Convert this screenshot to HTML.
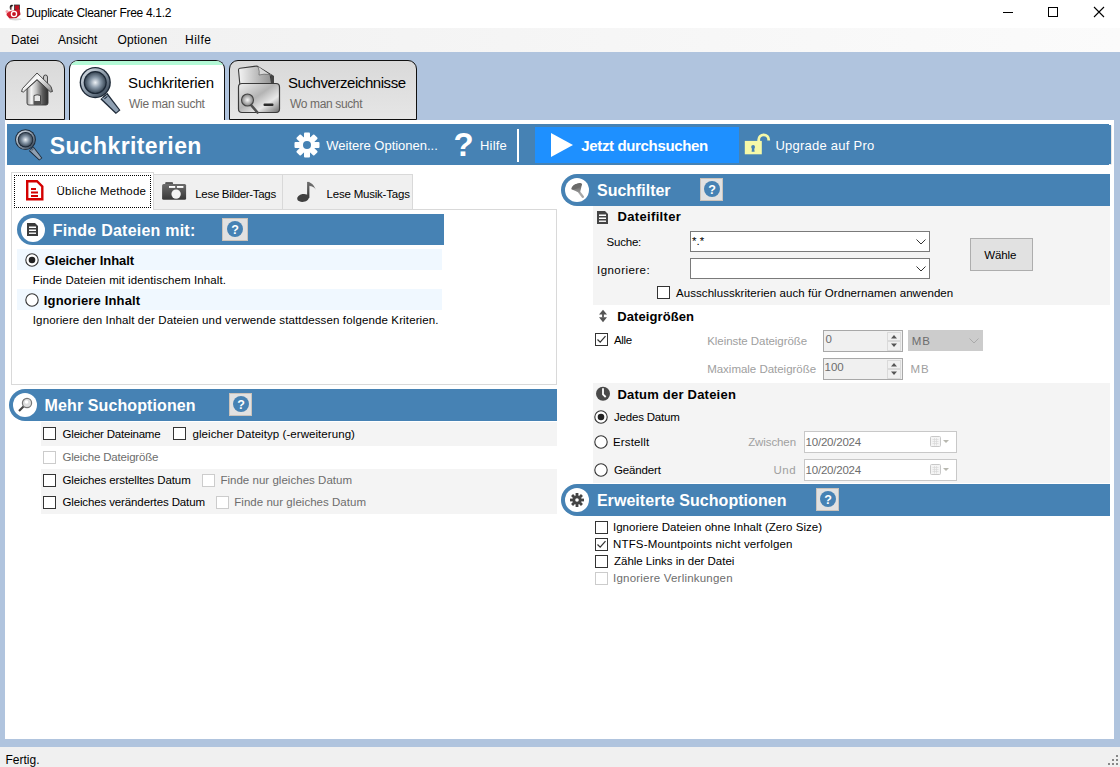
<!DOCTYPE html><html><head><meta charset='utf-8'><style>html,body{margin:0;padding:0;width:1120px;height:767px;overflow:hidden;position:relative}body{font-family:"Liberation Sans", sans-serif;}.t{position:absolute;line-height:1;white-space:nowrap}</style></head><body>
<div style='position:absolute;left:0px;top:0px;width:1120px;height:28px;background:#fff'></div>
<div style='position:absolute;left:0px;top:28px;width:1120px;height:24px;background:linear-gradient(to right,#f0f0f0,#fbfbfb)'></div>
<div style='position:absolute;left:0px;top:52px;width:1120px;height:695px;background:#b0c4de'></div>
<div style='position:absolute;left:0px;top:747px;width:1120px;height:20px;background:#f0f0f0'></div>
<svg style='position:absolute;left:2px;top:2px;' width='24' height='24' viewBox='0 0 24 24'>
<defs><linearGradient id='apg' x1='0' y1='0' x2='1' y2='1'><stop offset='0' stop-color='#e83040'/><stop offset='1' stop-color='#b00818'/></linearGradient></defs>
<ellipse cx='13.5' cy='17.3' rx='6' ry='1.1' fill='#c8c8c8' opacity='.7'/>
<rect x='12.5' y='3' width='5' height='5' fill='#c01020' stroke='#333' stroke-width='.8'/>
<path d='M5 10 L17.5 7 L18.5 12.5 L14.5 16 L7.5 16.5 L4.5 13 Z' fill='url(#apg)'/>
<path d='M8 7.5 Q7 3 9.5 2.7 L11.5 3 Q9.5 4 10 8' fill='#1a1a1a'/>
<path d='M9.5 8.5 Q8.5 5 10 4.5' stroke='#f0b0b0' stroke-width='1' fill='none'/>
<circle cx='12' cy='12' r='2.6' fill='none' stroke='#fff' stroke-width='1.3'/>
<circle cx='12' cy='12' r='1' fill='#c01020'/>
<circle cx='5' cy='9.5' r='1.5' fill='#f4a8b0'/>
</svg>
<div class='t' style='left:26px;top:7px;font-size:12px;font-weight:400;color:#000;letter-spacing:-0.296px;'>Duplicate Cleaner Free 4.1.2</div>
<div style='position:absolute;left:1003px;top:12px;width:10px;height:1px;background:#000'></div>
<div style='position:absolute;left:1048px;top:7px;width:10px;height:10px;border:1px solid #000;box-sizing:border-box'></div>
<svg style='position:absolute;left:1093px;top:6px;' width='12' height='12' viewBox='0 0 12 12'><path d='M1 1 L11 11 M11 1 L1 11' stroke='#000' stroke-width='1.1'/></svg>
<div class='t' style='left:11px;top:34px;font-size:12px;font-weight:400;color:#000;letter-spacing:0.000px;'>Datei</div>
<div class='t' style='left:58px;top:34px;font-size:12px;font-weight:400;color:#000;letter-spacing:0.000px;'>Ansicht</div>
<div class='t' style='left:117.5px;top:34px;font-size:12px;font-weight:400;color:#000;letter-spacing:0.143px;'>Optionen</div>
<div class='t' style='left:185px;top:34px;font-size:12px;font-weight:400;color:#000;letter-spacing:0.500px;'>Hilfe</div>
<div class='t' style='left:5.5px;top:753.5px;font-size:12px;font-weight:400;color:#000;letter-spacing:0.000px;'>Fertig.</div>
<svg style='position:absolute;left:1108px;top:755px;' width='11' height='11' viewBox='0 0 11 11'><g fill='#888'><rect x='8' y='0' width='2' height='2'/><rect x='4' y='4' width='2' height='2'/><rect x='8' y='4' width='2' height='2'/><rect x='0' y='8' width='2' height='2'/><rect x='4' y='8' width='2' height='2'/><rect x='8' y='8' width='2' height='2'/></g></svg>
<div style='position:absolute;left:5px;top:60px;width:60px;height:60px;border:1.5px solid #101010;border-radius:9px 9px 0 0;box-sizing:border-box;background:linear-gradient(#d9d9d9,#e6e6e6)'></div>
<div style='position:absolute;left:229px;top:60px;width:188px;height:60px;border:1.5px solid #101010;border-radius:9px 9px 0 0;box-sizing:border-box;background:linear-gradient(#d9d9d9,#e6e6e6)'></div>
<div style='position:absolute;left:5px;top:120px;width:1109px;height:619px;background:#fff'></div>
<div style='position:absolute;left:69px;top:60px;width:156px;height:60px;border:1.5px solid #101010;border-bottom:none;border-radius:9px 9px 0 0;box-sizing:border-box;background:#fff;overflow:hidden'><div style='height:4px;background:#b3f9d6;margin-top:0px'></div></div>
<svg style='position:absolute;left:20px;top:71px;' width='34' height='36' viewBox='0 0 34 36'>
<defs>
<linearGradient id='hb' x1='0' y1='0' x2='1' y2='0'><stop offset='0' stop-color='#9a9a9a'/><stop offset='.2' stop-color='#f6f6f6'/><stop offset='.45' stop-color='#c0c0c0'/><stop offset='.75' stop-color='#5a5a5a'/><stop offset='1' stop-color='#2e2e2e'/></linearGradient>
<linearGradient id='hr' x1='0' y1='0' x2='1' y2='1'><stop offset='0' stop-color='#d0d0d0'/><stop offset='.4' stop-color='#fafafa'/><stop offset='1' stop-color='#8a8a8a'/></linearGradient>
</defs>
<path d='M23.5 6 Q23.5 4 25.5 4 Q27.5 4 27.5 6 L27.5 15 L23.5 15Z' fill='#c8c8c8' stroke='#3a3a3a' stroke-width='.9'/>
<path d='M7 18 L7 32 Q7 34 9 34 L26 34 Q28 34 28 32 L28 18 L17 9 Z' fill='url(#hb)' stroke='#3a3a3a' stroke-width='.9'/>
<path d='M1.5 20.5 L2.5 17.5 L17 2 L31 15.5 L32.5 20.5 L30.5 21 L17 8.5 L3.5 21 Z' fill='url(#hr)' stroke='#3a3a3a' stroke-width='.9'/>
<path d='M14 33.5 V24.5 Q17 23 20.5 24.5 V33.5' fill='#e8e8e8' stroke='#3a3a3a' stroke-width='.9'/>
<rect x='14' y='30' width='6.5' height='4' fill='#555'/>
</svg>
<svg style='position:absolute;left:72.35px;top:61.75px;' width='54.0' height='54.0' viewBox='0 0 54.0 54.0'><g transform='scale(1.5)'>
<defs>
<linearGradient id='rgt' x1='0' y1='0' x2='1' y2='1'><stop offset='0' stop-color='#e4eaf0'/><stop offset='.5' stop-color='#8c9aa8'/><stop offset='1' stop-color='#2a3848'/></linearGradient>
<radialGradient id='lgt' cx='.5' cy='.5' r='.55'><stop offset='0' stop-color='#eef2f6'/><stop offset='.45' stop-color='#8a9aaa'/><stop offset='1' stop-color='#2c3a48'/></radialGradient>
<linearGradient id='hgt' x1='0' y1='0' x2='1' y2='0'><stop offset='0' stop-color='#56687a'/><stop offset='.5' stop-color='#c8d4e0'/><stop offset='1' stop-color='#3c4c5c'/></linearGradient>
</defs>
<path d='M18.9 24.9 L23.5 20.5 L32.3 32.1 L29.2 34.6 Z' fill='#1c2836'/>
<path d='M19.9 24.5 L23.2 21.6 L31.3 32.0 L29.4 33.6 Z' fill='#8fa0b2'/>
<path d='M20.6 23.6 L22.6 21.9' stroke='#1c2836' stroke-width='.7'/><path d='M21.6 24.6 L23.6 22.9' stroke='#1c2836' stroke-width='.7'/>
<circle cx='15.5' cy='13.7' r='10.4' fill='#1c2836'/>
<circle cx='15.5' cy='13.7' r='9.5' fill='url(#rgt)'/>
<circle cx='15.5' cy='13.7' r='7.7' fill='#1c2836'/>
<circle cx='15.5' cy='13.7' r='6.9' fill='url(#lgt)'/>
</g></svg>
<div class='t' style='left:128px;top:75px;font-size:15px;font-weight:400;color:#000;letter-spacing:-0.125px;'>Suchkriterien</div>
<div class='t' style='left:129px;top:97.5px;font-size:12px;font-weight:400;color:#6e6a66;letter-spacing:-0.292px;'>Wie man sucht</div>
<svg style='position:absolute;left:236px;top:64px;' width='46' height='52' viewBox='0 0 46 52'>
<defs>
<linearGradient id='fb' x1='0' y1='0' x2='1' y2='1'><stop offset='0' stop-color='#f0f0f0'/><stop offset='.45' stop-color='#b4b4b4'/><stop offset='.7' stop-color='#e8e8e8'/><stop offset='1' stop-color='#6a6a6a'/></linearGradient>
<linearGradient id='fp' x1='0' y1='0' x2='1' y2='0'><stop offset='0' stop-color='#f4f4f4'/><stop offset='1' stop-color='#909090'/></linearGradient>
<radialGradient id='fl' cx='.5' cy='.5' r='.5'><stop offset='0' stop-color='#f8f8f8'/><stop offset='1' stop-color='#808080'/></radialGradient>
</defs>
<path d='M4 22 L2.5 6 Q2.5 4.5 4 4.3 L21 2 L34 10 L36 22 Z' fill='url(#fp)' stroke='#3a3a3a' stroke-width='1.1'/>
<path d='M22 2.5 Q24 8 23 11 Q28 9.5 33.5 10.5' fill='#d8d8d8' stroke='#555' stroke-width='.6'/>
<path d='M35 10 L38 12 L38 22 L35 22Z' fill='#444'/>
<path d='M2.5 23 Q2.5 19.5 6 19.5 L40 19.5 Q43.5 19.5 43.5 23 L43.5 45 Q43.5 48.5 40 48.5 L6 48.5 Q2.5 48.5 2.5 45 Z' fill='url(#fb)' stroke='#3a3a3a' stroke-width='1.2'/>
<rect x='27.5' y='39.5' width='10' height='2.5' rx='1' fill='#2a2a2a'/>
<path d='M15 41 L21.5 48.5' stroke='#505050' stroke-width='2.6' stroke-linecap='round'/>
<circle cx='11.5' cy='36' r='6' fill='url(#fl)' stroke='#444' stroke-width='1.1'/>
</svg>
<div class='t' style='left:288px;top:75px;font-size:15px;font-weight:400;color:#000;letter-spacing:-0.438px;'>Suchverzeichnisse</div>
<div class='t' style='left:290px;top:97.5px;font-size:12px;font-weight:400;color:#6e6a66;letter-spacing:-0.364px;'>Wo man sucht</div>
<div style='position:absolute;left:7px;top:124px;width:1102px;height:41px;background:#4682b4'></div>
<div style='position:absolute;left:1109px;top:125px;width:2px;height:39px;background:#4682b4;box-shadow:0.5px 0.5px 0.5px rgba(80,60,40,.25)'></div>
<svg style='position:absolute;left:10px;top:126px;' width='36.0' height='36.0' viewBox='0 0 36.0 36.0'><g transform='scale(1.0)'>
<defs>
<linearGradient id='rgh' x1='0' y1='0' x2='1' y2='1'><stop offset='0' stop-color='#e4eaf0'/><stop offset='.5' stop-color='#8c9aa8'/><stop offset='1' stop-color='#2a3848'/></linearGradient>
<radialGradient id='lgh' cx='.5' cy='.5' r='.55'><stop offset='0' stop-color='#eef2f6'/><stop offset='.45' stop-color='#8a9aaa'/><stop offset='1' stop-color='#2c3a48'/></radialGradient>
<linearGradient id='hgh' x1='0' y1='0' x2='1' y2='0'><stop offset='0' stop-color='#56687a'/><stop offset='.5' stop-color='#c8d4e0'/><stop offset='1' stop-color='#3c4c5c'/></linearGradient>
</defs>
<path d='M18.9 24.9 L23.5 20.5 L32.3 32.1 L29.2 34.6 Z' fill='#1c2836'/>
<path d='M19.9 24.5 L23.2 21.6 L31.3 32.0 L29.4 33.6 Z' fill='#8fa0b2'/>
<path d='M20.6 23.6 L22.6 21.9' stroke='#1c2836' stroke-width='.7'/><path d='M21.6 24.6 L23.6 22.9' stroke='#1c2836' stroke-width='.7'/>
<circle cx='15.5' cy='13.7' r='10.4' fill='#1c2836'/>
<circle cx='15.5' cy='13.7' r='9.5' fill='url(#rgh)'/>
<circle cx='15.5' cy='13.7' r='7.7' fill='#1c2836'/>
<circle cx='15.5' cy='13.7' r='6.9' fill='url(#lgh)'/>
</g></svg>
<div class='t' style='left:49.7px;top:134.5px;font-size:23px;font-weight:700;color:#fff;letter-spacing:0.392px;'>Suchkriterien</div>
<svg style='position:absolute;left:294px;top:132px;' width='26' height='26' viewBox='0 0 26 26'><g transform='translate(13 13)' fill='#fff'>
<circle r='8.2'/>
<rect x='-3' y='-12.5' width='6' height='6' rx='1' transform='rotate(0)'/><rect x='-3' y='-12.5' width='6' height='6' rx='1' transform='rotate(45)'/><rect x='-3' y='-12.5' width='6' height='6' rx='1' transform='rotate(90)'/><rect x='-3' y='-12.5' width='6' height='6' rx='1' transform='rotate(135)'/><rect x='-3' y='-12.5' width='6' height='6' rx='1' transform='rotate(180)'/><rect x='-3' y='-12.5' width='6' height='6' rx='1' transform='rotate(225)'/><rect x='-3' y='-12.5' width='6' height='6' rx='1' transform='rotate(270)'/><rect x='-3' y='-12.5' width='6' height='6' rx='1' transform='rotate(315)'/>
<circle r='4' fill='#4682b4'/></g></svg>
<div class='t' style='left:326.3px;top:138.8px;font-size:13px;font-weight:400;color:#fff;letter-spacing:-0.017px;'>Weitere Optionen...</div>
<div class='t' style='left:453.5px;top:127.5px;font-size:33px;font-weight:700;color:#fff;'>?</div>
<div class='t' style='left:480px;top:138.8px;font-size:13px;font-weight:400;color:#fff;letter-spacing:0.175px;'>Hilfe</div>
<div style='position:absolute;left:517px;top:129px;width:2px;height:33px;background:#fff'></div>
<div style='position:absolute;left:535px;top:127px;width:204px;height:36px;background:#1e90ff'></div>
<svg style='position:absolute;left:550px;top:133px;' width='24' height='25' viewBox='0 0 24 25'><path d='M1 0 L23 12 L1 24 Z' fill='#fff'/></svg>
<div class='t' style='left:581.3px;top:138px;font-size:15px;font-weight:700;color:#fff;letter-spacing:-0.356px;'>Jetzt durchsuchen</div>
<svg style='position:absolute;left:740px;top:128px;' width='36' height='32' viewBox='0 0 36 32'>
<path d='M18.7 13.5 V11.8 a5 5 0 0 1 10 0 V12.6' fill='none' stroke='#f6f9a8' stroke-width='2.8'/>
<rect x='4.8' y='12.9' width='17' height='13.4' fill='#f6f9a8'/>
<circle cx='13.1' cy='19' r='1.9' fill='#4682b4'/><path d='M12.1 19.5 H14.1 L14.6 23.8 H11.6Z' fill='#4682b4'/>
</svg>
<div class='t' style='left:775.4px;top:138.8px;font-size:13px;font-weight:400;color:#fff;letter-spacing:0.243px;'>Upgrade auf Pro</div>
<div style='position:absolute;left:11px;top:209px;width:546px;height:176px;border:1px solid #d9d9d9;box-sizing:border-box;background:#fff'></div>
<div style='position:absolute;left:153px;top:174px;width:130px;height:36px;border:1px solid #d9d9d9;box-sizing:border-box;background:#f0f0f0'></div>
<div style='position:absolute;left:282px;top:174px;width:131px;height:36px;border:1px solid #d9d9d9;box-sizing:border-box;background:#f0f0f0'></div>
<div style='position:absolute;left:11px;top:172px;width:143px;height:38px;border:1px solid #d9d9d9;border-bottom:none;box-sizing:border-box;background:#fff'></div>
<div style='position:absolute;left:14px;top:175px;width:137px;height:33px;border:1px dotted #000;box-sizing:border-box'></div>
<svg style='position:absolute;left:26px;top:180px;' width='18' height='21' viewBox='0 0 18 21'><path d='M1.2 1.2 H11 L16.3 6.5 V19.3 H1.2 Z' fill='none' stroke='#d40000' stroke-width='2.4' stroke-linejoin='miter'/><rect x='5' y='8' width='5' height='2' fill='#d40000'/><rect x='5' y='11.5' width='7' height='2' fill='#d40000'/><rect x='5' y='15' width='7' height='2' fill='#d40000'/></svg>
<div class='t' style='left:56.6px;top:186px;font-size:11.5px;font-weight:400;color:#000;letter-spacing:0.221px;'>Übliche Methode</div>
<svg style='position:absolute;left:161px;top:181px;' width='26' height='20' viewBox='0 0 26 20'><defs><linearGradient id='cam' x1='0' y1='0' x2='0' y2='1'><stop offset='0' stop-color='#6c6c6c'/><stop offset='1' stop-color='#383838'/></linearGradient></defs><rect x='4.2' y='0.9' width='7.8' height='4' rx='1' fill='url(#cam)'/><rect x='1.1' y='3' width='24' height='15.7' rx='1.5' fill='url(#cam)'/><rect x='8' y='5' width='6.2' height='1.9' fill='#fff'/><rect x='15.9' y='5' width='6.5' height='1.9' fill='#fff'/><circle cx='15.1' cy='13.1' r='4.7' fill='#f4f4f4'/></svg>
<div class='t' style='left:195.3px;top:188.5px;font-size:11.5px;font-weight:400;color:#000;letter-spacing:-0.320px;'>Lese Bilder-Tags</div>
<svg style='position:absolute;left:296px;top:181px;' width='22' height='22' viewBox='0 0 22 22'><defs><linearGradient id='nte' x1='0' y1='0' x2='0' y2='1'><stop offset='0' stop-color='#707070'/><stop offset='1' stop-color='#363636'/></linearGradient></defs><path d='M11.1 0.9 Q17 1 19.9 8.7 Q17.5 5 13.4 5 Z' fill='#6a6a6a'/><rect x='11.1' y='0.9' width='2.3' height='16' fill='url(#nte)'/><ellipse cx='7.1' cy='16.9' rx='6' ry='3.9' transform='rotate(-10 7.1 16.9)' fill='#404040'/></svg>
<div class='t' style='left:326.6px;top:188.5px;font-size:11.5px;font-weight:400;color:#000;letter-spacing:-0.214px;'>Lese Musik-Tags</div>
<div style='position:absolute;left:17px;top:214px;width:427px;height:31px;background:#4682b4;border-radius:15.5px 0 0 15.5px'></div>
<div style='position:absolute;left:21px;top:218px;width:24px;height:24px;background:#fff;border-radius:50%'></div>
<svg style='position:absolute;left:27px;top:223px' width='11' height='13' viewBox='0 0 11 13'><path d='M0 0 H8 L11 3 V13 H0Z' fill='#3c3c3c'/><rect x='2' y='3.5' width='7' height='1.5' fill='#fff'/><rect x='2' y='6.5' width='7' height='1.5' fill='#fff'/><rect x='2' y='9.5' width='7' height='1.5' fill='#eee'/></svg>
<div class='t' style='left:52.7px;top:222.6px;font-size:16px;font-weight:700;color:#fff;letter-spacing:0.229px;'>Finde Dateien mit:</div>
<div style='position:absolute;left:222px;top:218px;width:26px;height:23px;background:#e1e1e1;border:1px solid #cbc3bb;box-sizing:border-box'></div>
<svg style='position:absolute;left:227.0px;top:221px;' width='16' height='16' viewBox='0 0 16 16'><circle cx='8' cy='8' r='8' fill='#4682b4'/><text x='8' y='12.6' text-anchor='middle' font-family='Liberation Sans' font-weight='700' font-size='12.5' fill='#fff'>?</text></svg>
<div style='position:absolute;left:17px;top:249px;width:425px;height:21px;background:#f0f8ff'></div>
<svg style='position:absolute;left:24.5px;top:252.5px;' width='14' height='14' viewBox='0 0 14 14'><circle cx='7' cy='7' r='6.2' fill='#fff' stroke='#333' stroke-width='1.1'/><circle cx='7' cy='7' r='3.3' fill='#222'/></svg>
<div class='t' style='left:44.8px;top:254px;font-size:13px;font-weight:700;color:#000;letter-spacing:-0.071px;'>Gleicher Inhalt</div>
<div class='t' style='left:32.8px;top:275px;font-size:11.5px;font-weight:400;color:#000;letter-spacing:0.111px;'>Finde Dateien mit identischem Inhalt.</div>
<div style='position:absolute;left:17px;top:289px;width:425px;height:21px;background:#f0f8ff'></div>
<svg style='position:absolute;left:24.5px;top:292.5px;' width='14' height='14' viewBox='0 0 14 14'><circle cx='7' cy='7' r='6.2' fill='#fff' stroke='#333' stroke-width='1.1'/></svg>
<div class='t' style='left:43.8px;top:294px;font-size:13px;font-weight:700;color:#000;letter-spacing:0.167px;'>Ignoriere Inhalt</div>
<div class='t' style='left:32.8px;top:314.5px;font-size:11.5px;font-weight:400;color:#000;letter-spacing:0.132px;'>Ignoriere den Inhalt der Dateien und verwende stattdessen folgende Kriterien.</div>
<div style='position:absolute;left:9px;top:389px;width:548px;height:32px;background:#4682b4;border-radius:16.0px 0 0 16.0px'></div>
<div style='position:absolute;left:13px;top:393px;width:24px;height:24px;background:#fff;border-radius:50%'></div>
<svg style='position:absolute;left:17px;top:397px' width='16' height='16' viewBox='0 0 16 16'><path d='M7 9 L2 14' stroke='#444' stroke-width='2.2'/><circle cx='10' cy='6' r='4.6' fill='#ddd' stroke='#777' stroke-width='1.2'/><circle cx='9.5' cy='5' r='1.8' fill='#fff'/></svg>
<div class='t' style='left:44.6px;top:398px;font-size:16px;font-weight:700;color:#fff;letter-spacing:0.106px;'>Mehr Suchoptionen</div>
<div style='position:absolute;left:229px;top:393px;width:23px;height:23px;background:#e1e1e1;border:1px solid #cbc3bb;box-sizing:border-box'></div>
<svg style='position:absolute;left:232.5px;top:396px;' width='16' height='16' viewBox='0 0 16 16'><circle cx='8' cy='8' r='8' fill='#4682b4'/><text x='8' y='12.6' text-anchor='middle' font-family='Liberation Sans' font-weight='700' font-size='12.5' fill='#fff'>?</text></svg>
<div style='position:absolute;left:41px;top:422px;width:516px;height:24px;background:#f4f4f4'></div>
<div style='position:absolute;left:43px;top:427px;width:13px;height:13px;border:1px solid #333333;box-sizing:border-box;background:#fff'></div>
<div class='t' style='left:62.6px;top:429px;font-size:11.5px;font-weight:400;color:#000;letter-spacing:-0.212px;'>Gleicher Dateiname</div>
<div style='position:absolute;left:173px;top:427px;width:13px;height:13px;border:1px solid #333333;box-sizing:border-box;background:#fff'></div>
<div class='t' style='left:192.5px;top:429px;font-size:11.5px;font-weight:400;color:#000;letter-spacing:0.065px;'>gleicher Dateityp (-erweiterung)</div>
<div style='position:absolute;left:43px;top:451px;width:13px;height:13px;border:1px solid #cccccc;box-sizing:border-box;background:#fff'></div>
<div class='t' style='left:62.4px;top:451.5px;font-size:11.5px;font-weight:400;color:#6d6d6d;letter-spacing:-0.176px;'>Gleiche Dateigröße</div>
<div style='position:absolute;left:41px;top:469px;width:516px;height:45px;background:#f4f4f4'></div>
<div style='position:absolute;left:43px;top:474px;width:13px;height:13px;border:1px solid #333333;box-sizing:border-box;background:#fff'></div>
<div class='t' style='left:62.4px;top:475px;font-size:11.5px;font-weight:400;color:#000;letter-spacing:-0.112px;'>Gleiches erstelltes Datum</div>
<div style='position:absolute;left:202px;top:474px;width:13px;height:13px;border:1px solid #cccccc;box-sizing:border-box;background:#fff'></div>
<div class='t' style='left:220.4px;top:475px;font-size:11.5px;font-weight:400;color:#6d6d6d;letter-spacing:0.026px;'>Finde nur gleiches Datum</div>
<div style='position:absolute;left:43px;top:496px;width:13px;height:13px;border:1px solid #333333;box-sizing:border-box;background:#fff'></div>
<div class='t' style='left:62.4px;top:497px;font-size:11.5px;font-weight:400;color:#000;letter-spacing:-0.124px;'>Gleiches verändertes Datum</div>
<div style='position:absolute;left:216px;top:496px;width:13px;height:13px;border:1px solid #cccccc;box-sizing:border-box;background:#fff'></div>
<div class='t' style='left:234.3px;top:497px;font-size:11.5px;font-weight:400;color:#6d6d6d;letter-spacing:0.030px;'>Finde nur gleiches Datum</div>
<div style='position:absolute;left:561px;top:174px;width:549px;height:32px;background:#4682b4;border-radius:16.0px 0 0 16.0px'></div>
<div style='position:absolute;left:565px;top:178px;width:24px;height:24px;background:#fff;border-radius:50%'></div>
<svg style='position:absolute;left:569px;top:182px' width='16' height='16' viewBox='0 0 16 16'><defs><linearGradient id='fun' x1='0' y1='0' x2='0' y2='1'><stop offset='0' stop-color='#5a5a5a'/><stop offset='1' stop-color='#9a9a9a'/></linearGradient></defs><path d='M10.5 10.5 L13.8 14.8' stroke='#a8a8a8' stroke-width='2.3' stroke-linecap='round'/><path d='M2.3 7.2 Q3 2.8 8 1.7 Q12 1 13 2 Q12 7 10.8 11.3 Q6.5 8.8 2.3 7.2Z' fill='url(#fun)'/><ellipse cx='7.7' cy='4.3' rx='5.6' ry='2.2' transform='rotate(-27 7.7 4.3)' fill='#6a6a6a'/></svg>
<div class='t' style='left:597px;top:182.6px;font-size:16px;font-weight:700;color:#fff;letter-spacing:-0.022px;'>Suchfilter</div>
<div style='position:absolute;left:700px;top:178px;width:23px;height:23px;background:#e1e1e1;border:1px solid #cbc3bb;box-sizing:border-box'></div>
<svg style='position:absolute;left:703.5px;top:181px;' width='16' height='16' viewBox='0 0 16 16'><circle cx='8' cy='8' r='8' fill='#4682b4'/><text x='8' y='12.6' text-anchor='middle' font-family='Liberation Sans' font-weight='700' font-size='12.5' fill='#fff'>?</text></svg>
<div style='position:absolute;left:593px;top:206px;width:517px;height:99px;background:#f4f4f4'></div>
<svg style='position:absolute;left:597px;top:211px;' width='11' height='13' viewBox='0 0 11 13'><path d='M0 0 H8 L11 3 V13 H0Z' fill='#444'/><rect x='2' y='3.5' width='7' height='1.5' fill='#fff'/><rect x='2' y='6.5' width='7' height='1.5' fill='#fff'/><rect x='2' y='9.5' width='7' height='1.5' fill='#eee'/></svg>
<div class='t' style='left:617.6px;top:210.4px;font-size:13px;font-weight:700;color:#000;letter-spacing:0.320px;'>Dateifilter</div>
<div class='t' style='left:606.5px;top:237px;font-size:11.5px;font-weight:400;color:#000;letter-spacing:-0.200px;'>Suche:</div>
<div style='position:absolute;left:690px;top:231px;width:240px;height:21px;border:1px solid #7a7a7a;box-sizing:border-box;background:#fff'></div>
<svg style='position:absolute;left:916px;top:239px;' width='10' height='6' viewBox='0 0 10 6'><path d='M0.5 0.5 L5 5 L9.5 0.5' fill='none' stroke='#333' stroke-width='1'/></svg>
<div class='t' style='left:692px;top:236px;font-size:11.5px;font-weight:400;color:#000;'>*.*</div>
<div class='t' style='left:597px;top:264.5px;font-size:11.5px;font-weight:400;color:#000;letter-spacing:0.444px;'>Ignoriere:</div>
<div style='position:absolute;left:690px;top:258px;width:240px;height:21px;border:1px solid #7a7a7a;box-sizing:border-box;background:#fff'></div>
<svg style='position:absolute;left:916px;top:266px;' width='10' height='6' viewBox='0 0 10 6'><path d='M0.5 0.5 L5 5 L9.5 0.5' fill='none' stroke='#333' stroke-width='1'/></svg>
<div style='position:absolute;left:657px;top:286px;width:13px;height:13px;border:1px solid #333333;box-sizing:border-box;background:#fff'></div>
<div class='t' style='left:676px;top:287.6px;font-size:11.5px;font-weight:400;color:#000;letter-spacing:0.062px;'>Ausschlusskriterien auch für Ordnernamen anwenden</div>
<div style='position:absolute;left:970px;top:238px;width:63px;height:33px;background:#e1e1e1;border:1px solid #adadad;box-sizing:border-box'></div>
<div class='t' style='left:984.2px;top:250.2px;font-size:11.5px;font-weight:400;color:#000;letter-spacing:-0.100px;'>Wähle</div>
<svg style='position:absolute;left:598px;top:309px;' width='10' height='14' viewBox='0 0 10 14'><path d='M5 0.7 L9 5.5 H1Z M5 13.3 L9 8.3 H1Z' fill='#555'/><rect x='4.1' y='5' width='1.8' height='3.5' fill='#555'/></svg>
<div class='t' style='left:617.2px;top:310px;font-size:13px;font-weight:700;color:#000;letter-spacing:0.100px;'>Dateigrößen</div>
<div style='position:absolute;left:595px;top:333px;width:13px;height:13px;border:1px solid #333333;box-sizing:border-box;background:#fff'></div>
<svg style='position:absolute;left:595px;top:333px;' width='13' height='13' viewBox='0 0 13 13'><path d='M2.5 6.5 L5.2 9.2 L10.5 3.2' fill='none' stroke='#333' stroke-width='1.25'/></svg>
<div class='t' style='left:614px;top:335px;font-size:11.5px;font-weight:400;color:#000;letter-spacing:-0.333px;'>Alle</div>
<div class='t' style='left:707.2px;top:336px;font-size:11.5px;font-weight:400;color:#a0a0a0;letter-spacing:-0.056px;'>Kleinste Dateigröße</div>
<div class='t' style='left:707.2px;top:364px;font-size:11.5px;font-weight:400;color:#a0a0a0;letter-spacing:-0.022px;'>Maximale Dateigröße</div>
<div style='position:absolute;left:823px;top:330px;width:80px;height:22px;border:1px solid #a8a8a8;box-sizing:border-box;background:#f0f0f0'></div>
<div style='position:absolute;left:887px;top:332px;width:14px;height:9px;border:1px solid #dadada;box-sizing:border-box;background:#f0f0f0'></div>
<div style='position:absolute;left:887px;top:341px;width:14px;height:9.5px;border:1px solid #dadada;box-sizing:border-box;background:#f0f0f0'></div>
<svg style='position:absolute;left:890px;top:334px;' width='8' height='14' viewBox='0 0 8 14'><path d='M4 1 L7 4.5 H1Z M4 13 L7 9.5 H1Z' fill='#555'/></svg>
<div class='t' style='left:825.5px;top:334px;font-size:11.5px;font-weight:400;color:#6d6d6d;'>0</div>
<div style='position:absolute;left:823px;top:358px;width:80px;height:22px;border:1px solid #a8a8a8;box-sizing:border-box;background:#f0f0f0'></div>
<div style='position:absolute;left:887px;top:360px;width:14px;height:9px;border:1px solid #dadada;box-sizing:border-box;background:#f0f0f0'></div>
<div style='position:absolute;left:887px;top:369px;width:14px;height:9.5px;border:1px solid #dadada;box-sizing:border-box;background:#f0f0f0'></div>
<svg style='position:absolute;left:890px;top:362px;' width='8' height='14' viewBox='0 0 8 14'><path d='M4 1 L7 4.5 H1Z M4 13 L7 9.5 H1Z' fill='#555'/></svg>
<div class='t' style='left:824.5px;top:362px;font-size:11.5px;font-weight:400;color:#6d6d6d;'>100</div>
<div style='position:absolute;left:908px;top:330px;width:75px;height:21px;background:#cccccc'></div>
<svg style='position:absolute;left:969px;top:338px;' width='10' height='6' viewBox='0 0 10 6'><path d='M0.5 0.5 L5 5 L9.5 0.5' fill='none' stroke='#aaa' stroke-width='1'/></svg>
<div class='t' style='left:911.7px;top:335.6px;font-size:11.5px;font-weight:400;color:#6d6d6d;letter-spacing:1.000px;'>MB</div>
<div class='t' style='left:910.5px;top:364px;font-size:11.5px;font-weight:400;color:#a0a0a0;letter-spacing:1.000px;'>MB</div>
<div style='position:absolute;left:593px;top:383px;width:517px;height:100px;background:#f4f4f4'></div>
<svg style='position:absolute;left:595px;top:386px;' width='16' height='16' viewBox='0 0 16 16'><circle cx='8' cy='7.8' r='7' fill='#4a4a4a'/><path d='M8 2.3 V8.3 L10.7 11' fill='none' stroke='#fff' stroke-width='1.8'/></svg>
<div class='t' style='left:617.4px;top:388px;font-size:13px;font-weight:700;color:#000;letter-spacing:0.225px;'>Datum der Dateien</div>
<svg style='position:absolute;left:594.3px;top:409.8px;' width='14' height='14' viewBox='0 0 14 14'><circle cx='7' cy='7' r='6.2' fill='#fff' stroke='#333' stroke-width='1.1'/><circle cx='7' cy='7' r='3.3' fill='#222'/></svg>
<div class='t' style='left:614px;top:411.7px;font-size:11.5px;font-weight:400;color:#000;letter-spacing:-0.200px;'>Jedes Datum</div>
<svg style='position:absolute;left:594.3px;top:434.7px;' width='14' height='14' viewBox='0 0 14 14'><circle cx='7' cy='7' r='6.2' fill='#fff' stroke='#333' stroke-width='1.1'/></svg>
<div class='t' style='left:613px;top:437px;font-size:11.5px;font-weight:400;color:#000;letter-spacing:0.143px;'>Erstellt</div>
<div class='t' style='left:748.2px;top:437px;font-size:11.5px;font-weight:400;color:#a0a0a0;letter-spacing:-0.100px;'>Zwischen</div>
<svg style='position:absolute;left:594.3px;top:462.5px;' width='14' height='14' viewBox='0 0 14 14'><circle cx='7' cy='7' r='6.2' fill='#fff' stroke='#333' stroke-width='1.1'/></svg>
<div class='t' style='left:614px;top:465px;font-size:11.5px;font-weight:400;color:#000;letter-spacing:-0.143px;'>Geändert</div>
<div class='t' style='left:773.5px;top:465px;font-size:11.5px;font-weight:400;color:#a0a0a0;letter-spacing:0.500px;'>Und</div>
<div style='position:absolute;left:804px;top:431px;width:153px;height:22px;border:1px solid #c8c8c8;box-sizing:border-box;background:#fff'></div>
<div class='t' style='left:805.6px;top:437px;font-size:11.5px;font-weight:400;color:#6d6d6d;letter-spacing:-0.222px;'>10/20/2024</div>
<svg style='position:absolute;left:930px;top:436px;' width='20' height='12' viewBox='0 0 20 12'><rect x='0.5' y='0.5' width='10' height='10' rx='1' fill='#f4f4f4' stroke='#c8c8c8'/><path d='M2.5 3.5 H8.5 M2.5 5.5 H8.5 M2.5 7.5 H8.5 M4.5 2 V9.5 M6.5 2 V9.5' stroke='#d8d8d8' stroke-width='.7'/><path d='M13 4 H19 L16 7Z' fill='#b8b8b0'/></svg>
<div style='position:absolute;left:804px;top:459px;width:153px;height:22px;border:1px solid #c8c8c8;box-sizing:border-box;background:#fff'></div>
<div class='t' style='left:805.6px;top:465px;font-size:11.5px;font-weight:400;color:#6d6d6d;letter-spacing:-0.222px;'>10/20/2024</div>
<svg style='position:absolute;left:930px;top:464px;' width='20' height='12' viewBox='0 0 20 12'><rect x='0.5' y='0.5' width='10' height='10' rx='1' fill='#f4f4f4' stroke='#c8c8c8'/><path d='M2.5 3.5 H8.5 M2.5 5.5 H8.5 M2.5 7.5 H8.5 M4.5 2 V9.5 M6.5 2 V9.5' stroke='#d8d8d8' stroke-width='.7'/><path d='M13 4 H19 L16 7Z' fill='#b8b8b0'/></svg>
<div style='position:absolute;left:561px;top:484px;width:549px;height:32px;background:#4682b4;border-radius:16.0px 0 0 16.0px'></div>
<div style='position:absolute;left:565px;top:488px;width:24px;height:24px;background:#fff;border-radius:50%'></div>
<svg style='position:absolute;left:570px;top:493px' width='14' height='14' viewBox='0 0 14 14'><g transform='translate(7 7)' fill='#444'><circle r='4.6'/><rect x='-1.4' y='-7' width='2.8' height='3' transform='rotate(0)'/><rect x='-1.4' y='-7' width='2.8' height='3' transform='rotate(45)'/><rect x='-1.4' y='-7' width='2.8' height='3' transform='rotate(90)'/><rect x='-1.4' y='-7' width='2.8' height='3' transform='rotate(135)'/><rect x='-1.4' y='-7' width='2.8' height='3' transform='rotate(180)'/><rect x='-1.4' y='-7' width='2.8' height='3' transform='rotate(225)'/><rect x='-1.4' y='-7' width='2.8' height='3' transform='rotate(270)'/><rect x='-1.4' y='-7' width='2.8' height='3' transform='rotate(315)'/><circle r='1.8' fill='#fff'/></g></svg>
<div class='t' style='left:596.9px;top:493.2px;font-size:16px;font-weight:700;color:#fff;letter-spacing:0.050px;'>Erweiterte Suchoptionen</div>
<div style='position:absolute;left:816px;top:488px;width:23px;height:23px;background:#e1e1e1;border:1px solid #cbc3bb;box-sizing:border-box'></div>
<svg style='position:absolute;left:819.5px;top:491px;' width='16' height='16' viewBox='0 0 16 16'><circle cx='8' cy='8' r='8' fill='#4682b4'/><text x='8' y='12.6' text-anchor='middle' font-family='Liberation Sans' font-weight='700' font-size='12.5' fill='#fff'>?</text></svg>
<div style='position:absolute;left:595px;top:521px;width:13px;height:13px;border:1px solid #333333;box-sizing:border-box;background:#fff'></div>
<div class='t' style='left:613px;top:522px;font-size:11.5px;font-weight:400;color:#000;letter-spacing:0.015px;'>Ignoriere Dateien ohne Inhalt (Zero Size)</div>
<div style='position:absolute;left:595px;top:538px;width:13px;height:13px;border:1px solid #333333;box-sizing:border-box;background:#fff'></div>
<svg style='position:absolute;left:595px;top:538px;' width='13' height='13' viewBox='0 0 13 13'><path d='M2.5 6.5 L5.2 9.2 L10.5 3.2' fill='none' stroke='#333' stroke-width='1.25'/></svg>
<div class='t' style='left:613px;top:539px;font-size:11.5px;font-weight:400;color:#000;letter-spacing:0.161px;'>NTFS-Mountpoints nicht verfolgen</div>
<div style='position:absolute;left:595px;top:555px;width:13px;height:13px;border:1px solid #333333;box-sizing:border-box;background:#fff'></div>
<div class='t' style='left:614px;top:556px;font-size:11.5px;font-weight:400;color:#000;letter-spacing:-0.022px;'>Zähle Links in der Datei</div>
<div style='position:absolute;left:595px;top:572px;width:13px;height:13px;border:1px solid #cccccc;box-sizing:border-box;background:#fff'></div>
<div class='t' style='left:613px;top:573px;font-size:11.5px;font-weight:400;color:#6d6d6d;letter-spacing:0.214px;'>Ignoriere Verlinkungen</div>
</body></html>
